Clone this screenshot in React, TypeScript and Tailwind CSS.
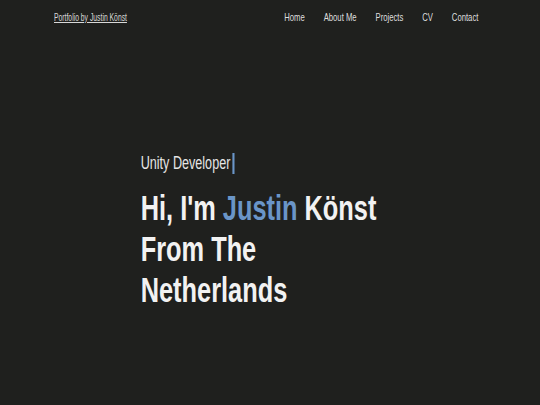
export default function App() {
  const navItems = ['Home', 'About Me', 'Projects', 'CV', 'Contact'];

  return (
    <div
      className="min-h-screen w-full overflow-hidden bg-[#1f201e] text-[#e6e6e6]"
      style={{ fontFamily: '"Liberation Sans", Arial, sans-serif' }}
    >
      {/* Top navigation — condensed look via horizontal scale */}
      <header className="flex h-[35px] items-center justify-between pl-[54px] pr-[62px]">
        <a href="#" className="origin-left scale-x-[0.68] text-[10px] text-[#d8d8d8] underline">
          Portfolio by Justin Könst
        </a>
        <nav className="flex origin-right scale-x-[0.7] gap-[27px] text-[11px] text-[#dedede]">
          {navItems.map((item) => (
            <a key={item} href="#">
              {item}
            </a>
          ))}
        </nav>
      </header>

      {/* Hero */}
      <main className="origin-left scale-x-[0.7] pl-[201px] pt-[118px]">
        <p className="flex items-center text-[18px] leading-[21px] text-[#e6e6e6]">
          Unity Developer
          <span className="ml-[3px] inline-block h-[21px] w-[3px] bg-[#6a95c8]" />
        </p>
        <h1 className="mt-[13px] origin-left scale-x-[1.035] text-[35px] font-bold leading-[41px] text-[#f2f2f2]">
          Hi, I'm <span className="text-[#6a95c8]">Justin</span> Könst
          <br />
          From The
          <br />
          Netherlands
        </h1>
      </main>
    </div>
  );
}
